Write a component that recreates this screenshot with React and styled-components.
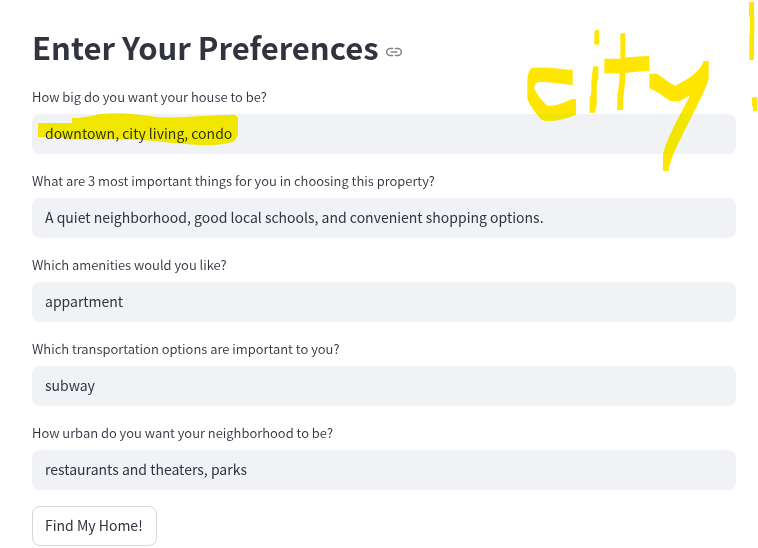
import React from "react";
import styled, { createGlobalStyle } from "styled-components";

const GlobalStyle = createGlobalStyle`
  *, *::before, *::after { box-sizing: border-box; }
  body {
    margin: 0;
    background: #ffffff;
    color: #31333f;
    font-family: "Noto Sans CJK SC", "Noto Sans", sans-serif;
  }
`;

const Page = styled.main`
  position: relative;
  padding: 20px 22px 2px 32px;
  overflow: hidden;
`;

const Heading = styled.header`
  display: flex;
  align-items: center;
  gap: 7px;
  height: 54px;
  margin-bottom: 12px;
`;

const Title = styled.h2`
  margin: 0;
  font-size: 31px;
  line-height: 44px;
  font-weight: 600;
  white-space: nowrap;
`;

const AnchorLink = styled.a`
  display: flex;
  margin-top: 10px;
  color: #84858c;
`;

const Form = styled.form`
  display: flex;
  flex-direction: column;
  align-items: flex-start;
  gap: 16px;
`;

const Field = styled.div`
  display: flex;
  flex-direction: column;
  gap: 6px;
  width: 100%;
`;

const Label = styled.label`
  font-size: 13px;
  line-height: 22px;
  font-weight: 350;
`;

const TextInput = styled.input`
  width: 100%;
  height: 40px;
  padding: 0 13px 2px;
  border: 0;
  border-radius: 8px;
  background: #f0f2f6;
  color: inherit;
  font-family: inherit;
  font-size: 14px;
`;

const SubmitButton = styled.button`
  height: 40px;
  padding: 0 13px 2px 12px;
  border: 1px solid #d6d6d9;
  border-radius: 8px;
  background: #ffffff;
  color: inherit;
  font-family: inherit;
  font-size: 14px;
`;

const Marker = styled.svg`
  position: absolute;
  top: ${({ $top }) => $top}px;
  ${({ $side }) => $side}: 0;
  fill: #ffe600;
  mix-blend-mode: darken;
  pointer-events: none;
`;

const fields = [
  { id: "size", label: "How big do you want your house to be?", value: "downtown, city living, condo" },
  {
    id: "priorities",
    label: "What are 3 most important things for you in choosing this property?",
    value: "A quiet neighborhood, good local schools, and convenient shopping options.",
  },
  { id: "amenities", label: "Which amenities would you like?", value: "appartment" },
  { id: "transport", label: "Which transportation options are important to you?", value: "subway" },
  { id: "urban", label: "How urban do you want your neighborhood to be?", value: "restaurants and theaters, parks" },
];

function LinkIcon() {
  return (
    <svg width="16" height="16" viewBox="0 0 16 16" fill="none" stroke="currentColor" strokeWidth="1.5" strokeLinecap="round" aria-hidden="true">
      <path d="M6.6 4.5H4.2a3.5 3.5 0 0 0 0 7h2.4M9.4 4.5h2.4a3.5 3.5 0 0 1 0 7H9.4M5.3 8h5.4" />
    </svg>
  );
}

function TextHighlight() {
  return (
    <Marker $top={20} $side="left" width="260" height="150" viewBox="0 0 780 450" aria-hidden="true">
      <path d="M114 309H216V294C250 294 273 288 300 282C365 276 423 285 470 291C550 296 625 284 700 284Q714 285 714 300V340Q713 360 696 366C645 381 585 375 535 370C485 366 450 360 405 359C310 357 245 361 216 358C190 357 185 351 160 351H114Z" />
    </Marker>
  );
}

function CityScribble() {
  return (
    <Marker $top={0} $side="right" width="248" height="190" viewBox="0 0 744 570" aria-hidden="true">
      <path d="M66 203C110 200 150 207 188 210V256C150 250 120 246 88 246Q76 247 72 263C80 283 98 306 115 318C142 317 168 306 184 297H198V344C166 357 137 364 105 363Q96 361 90 355C76 338 61 320 52 298V240Q53 213 66 203Z" />
      <path d="M255 90H267V134H253V106Z" />
      <path d="M250 199H265V237Q260 246 260 266V318Q255 326 255 338H239V292Q244 288 244 266C243 239 247 216 250 199Z" />
      <path d="M331 100H346V172C370 171 395 168 418 168V213C393 213 369 216 346 219C346 251 342 273 339 300V330H322V286C326 264 329 241 329 220H283V176H331V147L333 145L331 142Z" />
      <path d="M418 221H440C462 233 477 248 495 257C530 241 574 213 580 183H596V238C578 291 542 352 515 410C497 445 481 479 475 513H459V463C466 429 487 391 502 359C514 334 530 309 540 285C528 294 519 299 508 303H482C459 291 442 273 418 265Z" />
      <path d="M717 6H732V50L733 54V100L732 104V180H718V106L720 100V53L717 47Z" />
      <path d="M729 291H742V333H729V320L726 318V294Z" />
    </Marker>
  );
}

export default function App() {
  return (
    <>
      <GlobalStyle />
      <Page>
        <Heading>
          <Title id="preferences">Enter Your Preferences</Title>
          <AnchorLink href="#preferences" aria-label="Link to heading">
            <LinkIcon />
          </AnchorLink>
        </Heading>
        <Form onSubmit={(event) => event.preventDefault()}>
          {fields.map(({ id, label, value }) => (
            <Field key={id}>
              <Label htmlFor={id}>{label}</Label>
              <TextInput id={id} type="text" defaultValue={value} />
            </Field>
          ))}
          <SubmitButton type="submit">Find My Home!</SubmitButton>
        </Form>
        <TextHighlight />
        <CityScribble />
      </Page>
    </>
  );
}
